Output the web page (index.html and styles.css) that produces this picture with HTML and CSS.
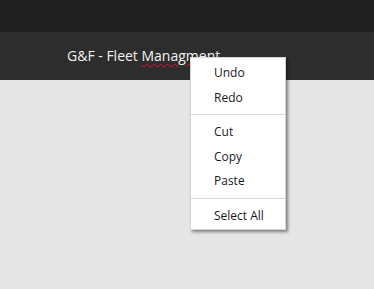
FILE: index.html
```html
<!DOCTYPE html>
<html lang="en">
<head>
    <meta charset="UTF-8">
    <meta name="viewport" content="width=device-width, initial-scale=1.0">
    <title>G&amp;F - Fleet Managment</title>
    <link rel="stylesheet" href="styles.css">
</head>
<body>

<div class="titlebar"></div>
<header class="app-header">
    <h1>G&amp;F - Fleet <span class="misspelled">Managment</span></h1>
</header>
<main class="content"></main>

<!-- context menu -->
<ul class="context-menu">
    <li>Undo</li>
    <li>Redo</li>
    <li class="sep"></li>
    <li>Cut</li>
    <li>Copy</li>
    <li>Paste</li>
    <li class="sep"></li>
    <li>Select All</li>
</ul>

</body>
</html>
```

FILE: styles.css
```css
html, body {
    margin: 0;
    height: 100%;
}
body {
    background-color: #e5e5e5;
    font-family: "Open Sans", "Noto Sans", sans-serif;
    position: relative;
    overflow: hidden;
}
.titlebar {
    height: 32px;
    background-color: #212121;
}
.app-header {
    height: 48px;
    background-color: #2d2d2d;
    padding-left: 67px;
    box-sizing: border-box;
}
.app-header h1 {
    margin: 0;
    padding-top: 14px;
    font-size: 14px;
    font-weight: 400;
    color: #f2f2f2;
    line-height: 20px;
}
.misspelled {
    text-decoration: underline wavy #e81123;
    text-decoration-thickness: 1px;
    text-underline-offset: 2px;
}
.context-menu {
    position: absolute;
    left: 190px;
    top: 57px;
    width: 94px;
    margin: 0;
    padding: 3px 0 1px;
    list-style: none;
    background-color: #fff;
    border: 1px solid #d4d4d4;
    box-shadow: 2px 2px 3px rgba(0, 0, 0, 0.45);
}
.context-menu li {
    height: 24.5px;
    line-height: 24.5px;
    padding-left: 23px;
    font-size: 12px;
    color: #1a1a1a;
}
.context-menu li.sep {
    height: 1px;
    margin: 4px 0 5px;
    padding: 0;
    background-color: #d6d6d6;
}
```
